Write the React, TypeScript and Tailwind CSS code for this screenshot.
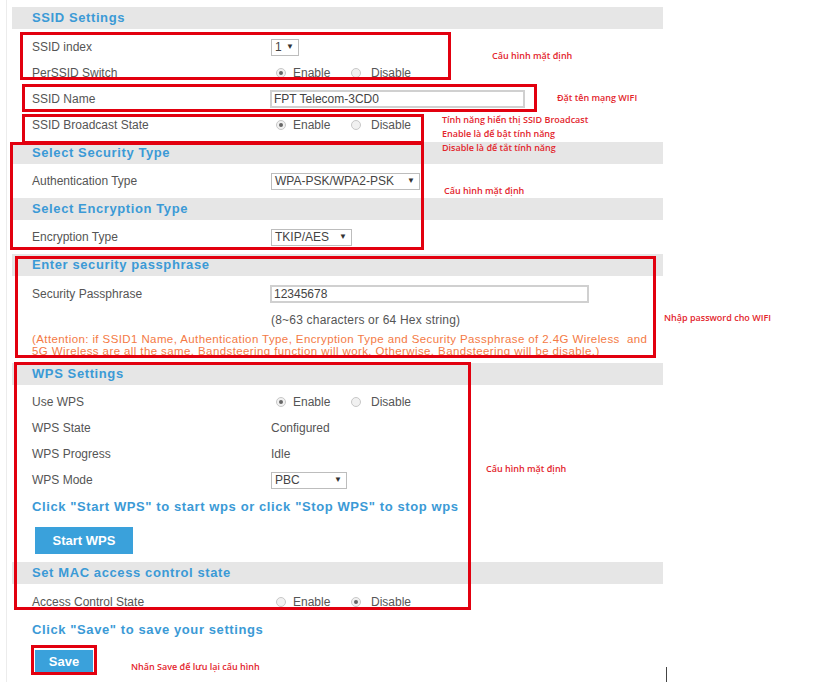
import React from "react";

const Header = ({ title, className = "" }: { title: string; className?: string }) => (
  <div className={`h-[22px] bg-[#e6e6e6] flex items-center pl-[20px] text-[13px] font-bold tracking-[0.6px] text-[#3b9ad6] ${className}`}>
    {title}
  </div>
);

const Row = ({ label, children, className = "" }: { label: string; children?: React.ReactNode; className?: string }) => (
  <div className={`h-[26px] flex items-center pl-[20px] text-[12px] text-[#555] ${className}`}>
    <div className="w-[239px] shrink-0">{label}</div>
    <div className="flex items-center">{children}</div>
  </div>
);

const Radio = ({ checked }: { checked: boolean }) => (
  <span className="w-[10px] h-[10px] rounded-full border border-[#c8c8c8] bg-[#f1f1f1] flex items-center justify-center shrink-0">
    {checked && <span className="w-[4px] h-[4px] rounded-full bg-[#666]" />}
  </span>
);

const RadioPair = ({ first }: { first: boolean }) => (
  <div className="flex items-center">
    <div className="w-[80px] flex items-center pl-[5px]">
      <Radio checked={first} />
      <span className="ml-[7px]">Enable</span>
    </div>
    <div className="flex items-center">
      <Radio checked={!first} />
      <span className="ml-[10px]">Disable</span>
    </div>
  </div>
);

const Select = ({ value, w }: { value: string; w: string }) => (
  <div className={`${w} h-[17px] border border-[#bdbdbd] bg-white flex items-center justify-between pl-[3px] pr-[4px] text-[12px] text-[#444]`}>
    <span>{value}</span>
    <span className="text-[8px] text-[#333]">▼</span>
  </div>
);

const Input = ({ value, w }: { value: string; w: string }) => (
  <div className={`${w} h-[18px] border-2 border-[#d0d0d0] bg-white flex items-center pl-[2px] text-[12px] text-[#444] -ml-[1px]`}>
    {value}
  </div>
);

const Box = ({ c }: { c: string }) => <div className={`absolute border-[3px] border-[#e2000f] ${c}`} />;

const Note = ({ c, children }: { c: string; children: React.ReactNode }) => (
  <div
    className={`absolute text-[9px] font-semibold text-[#e3262d] leading-[14px] whitespace-nowrap ${c}`}
    style={{ fontFamily: '"Open Sans", "Noto Sans", sans-serif' }}
  >
    {children}
  </div>
);

export default function App() {
  return (
    <div
      className="relative w-[835px] h-[694px] bg-white overflow-hidden"
      style={{ fontFamily: '"Liberation Sans", Arial, sans-serif' }}
    >
      <div className="ml-[6px] w-[657px] h-[682px] border-l border-[#ececec] pt-[7px] pl-[5px]">
        <div className="w-[651px]">
          <Header title="SSID Settings" />
          <div className="mt-[5px]">
            <Row label="SSID index">
              <Select value="1" w="w-[28px]" />
            </Row>
            <Row label="PerSSID Switch">
              <RadioPair first={true} />
            </Row>
            <Row label="SSID Name">
              <Input value="FPT Telecom-3CD0" w="w-[255px]" />
            </Row>
            <Row label="SSID Broadcast State">
              <RadioPair first={true} />
            </Row>
          </div>
          <Header title="Select Security Type" className="mt-[4px]" />
          <Row label="Authentication Type" className="mt-[4px]">
            <Select value="WPA-PSK/WPA2-PSK" w="w-[149px]" />
          </Row>
          <Header title="Select Encryption Type" className="mt-[4px]" />
          <Row label="Encryption Type" className="mt-[4px]">
            <Select value="TKIP/AES" w="w-[81px]" />
          </Row>
          <Header title="Enter security passphrase" className="mt-[4px]" />
          <Row label="Security Passphrase" className="mt-[5px]">
            <Input value="12345678" w="w-[319px]" />
          </Row>
          <Row label="">
            <span className="tracking-[0.2px]">(8~63 characters or 64 Hex string)</span>
          </Row>
          <div className="pl-[20px] text-[11.5px] leading-[12px] tracking-[0.4px] text-[#f47a45] whitespace-nowrap">
            <div>(Attention: if SSID1 Name, Authentication Type, Encryption Type and Security Passphrase of 2.4G Wireless&nbsp; and</div>
            <div>5G Wireless are all the same, Bandsteering function will work. Otherwise, Bandsteering will be disable.)</div>
          </div>
          <Header title="WPS Settings" className="mt-[6px]" />
          <div className="mt-[4px]">
            <Row label="Use WPS">
              <RadioPair first={true} />
            </Row>
            <Row label="WPS State">
              <span>Configured</span>
            </Row>
            <Row label="WPS Progress">
              <span>Idle</span>
            </Row>
            <Row label="WPS Mode">
              <Select value="PBC" w="w-[76px]" />
            </Row>
          </div>
          <div className="h-[28px] flex items-center pl-[20px] text-[13px] font-bold tracking-[0.6px] text-[#3b9ad6] whitespace-nowrap">
            Click "Start WPS" to start wps or click "Stop WPS" to stop wps
          </div>
          <div className="pl-[23px] mt-[6px]">
            <button className="w-[98px] h-[27px] bg-[#3aa1db] text-white text-[13px] font-bold flex items-center justify-center">
              Start WPS
            </button>
          </div>
          <Header title="Set MAC access control state" className="mt-[8px]" />
          <Row label="Access Control State" className="mt-[5px]">
            <RadioPair first={false} />
          </Row>
          <div className="h-[26px] mt-[2px] flex items-center pl-[20px] text-[13px] font-bold tracking-[0.6px] text-[#3b9ad6]">
            Click "Save" to save your settings
          </div>
          <div className="pl-[23px] mt-[7px]">
            <button className="w-[58px] h-[23px] bg-[#3aa1db] text-white text-[13px] font-bold flex items-center justify-center">
              Save
            </button>
          </div>
        </div>
      </div>

      <Box c="left-[20px] top-[32px] w-[431px] h-[48px]" />
      <Box c="left-[22px] top-[84px] w-[515px] h-[28px]" />
      <Box c="left-[22px] top-[114px] w-[402px] h-[30px]" />
      <Box c="left-[10px] top-[142px] w-[414px] h-[108px]" />
      <Box c="left-[15px] top-[256px] w-[641px] h-[102px]" />
      <Box c="left-[14px] top-[362px] w-[457px] h-[248px]" />
      <Box c="left-[31px] top-[645px] w-[66px] h-[30px]" />

      <Note c="left-[492px] top-[49px]">Cấu hình mặt định</Note>
      <Note c="left-[557px] top-[91px]">Đặt tên mạng WIFI</Note>
      <Note c="left-[442px] top-[113px]">Tính năng hiển thị SSID Broadcast</Note>
      <Note c="left-[442px] top-[127px]">Enable là để bật tính năng</Note>
      <Note c="left-[442px] top-[141px]">Disable là để tắt tính năng</Note>
      <Note c="left-[444px] top-[184px]">Cấu hình mặt định</Note>
      <Note c="left-[664px] top-[311px]">Nhập password cho WIFI</Note>
      <Note c="left-[486px] top-[462px]">Cấu hình mặt định</Note>
      <Note c="left-[131px] top-[660px]">Nhấn Save để lưu lại cấu hình</Note>

      <div className="absolute left-[666px] top-[667px] w-[1px] h-[15px] bg-[#444]" />
    </div>
  );
}
